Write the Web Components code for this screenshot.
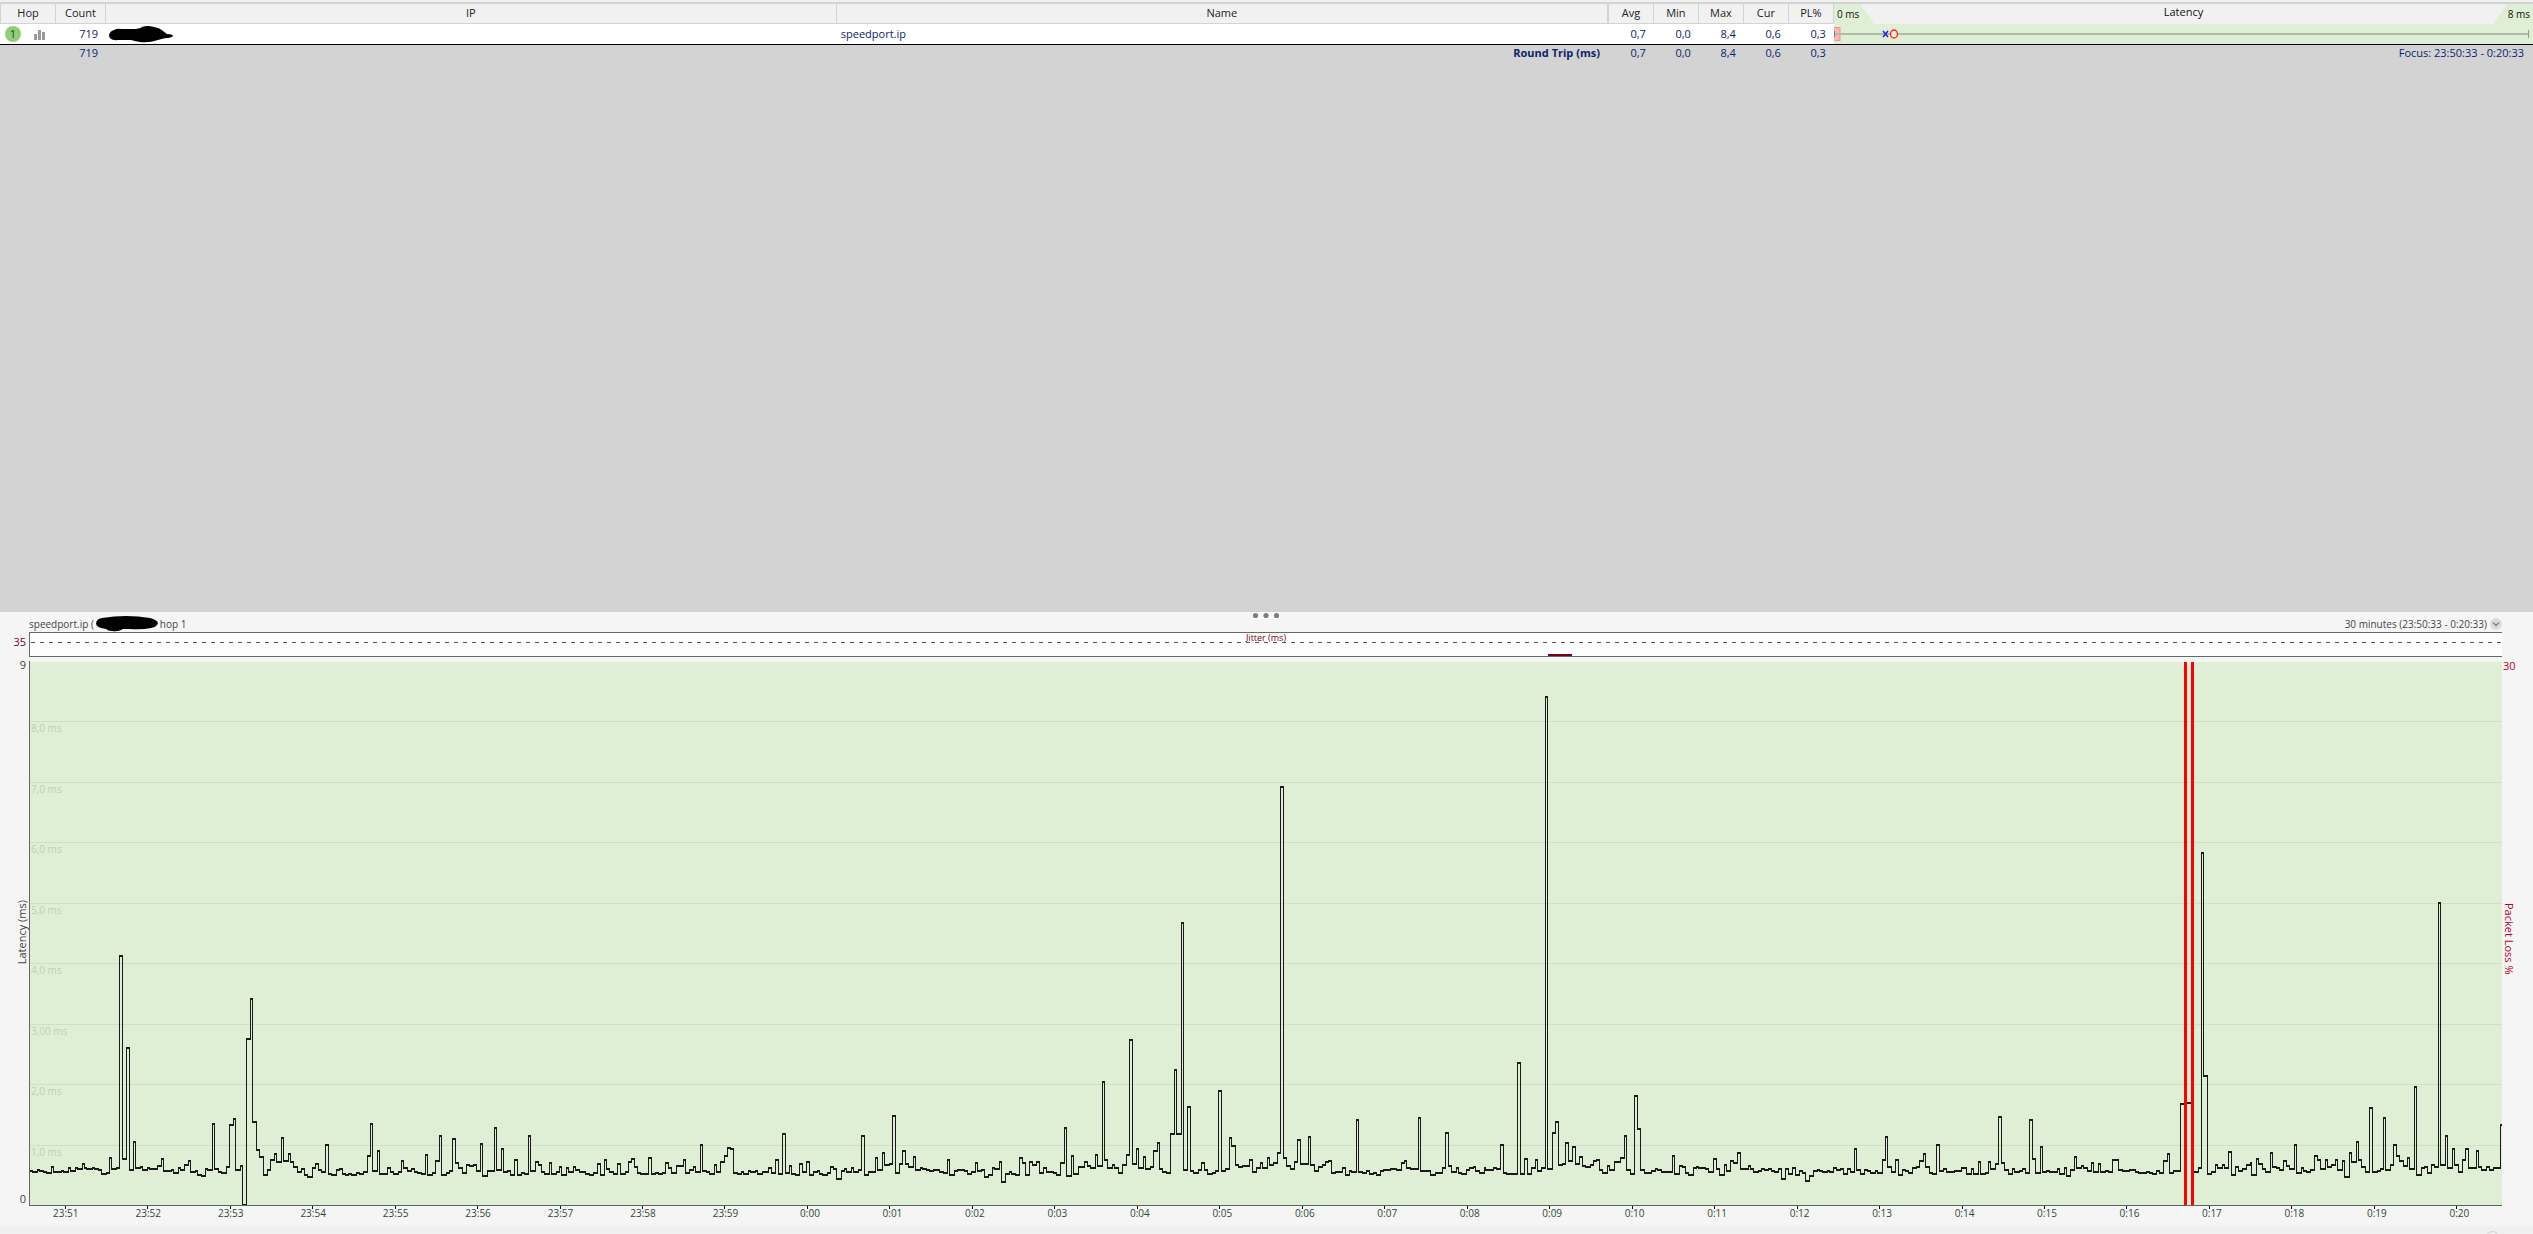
<!DOCTYPE html>
<html lang="en">
<head>
<meta charset="utf-8">
<title>speedport.ip - latency</title>
<style>
  html, body { height: 100%; margin: 0; }
  body { font: 12px/14px "Open Sans", "Noto Sans", sans-serif; background: #f0f0f0; color: #333; }
</style>
</head>
<body>
<ping-monitor></ping-monitor>

<script>
const component = (name, html, setup) => customElements.define(name, class extends HTMLElement {
  constructor() {
    super();
    const t = document.createElement('template');
    t.innerHTML = html;
    this.attachShadow({ mode: 'open' }).append(t.content.cloneNode(true));
  }
  connectedCallback() { if (setup) setup(this, this.shadowRoot); }
});

/* Marker-pen stroke that hides an address */
component('marker-stroke', `
<style>
  :host { display: inline-block; vertical-align: middle; height: 17px; width: 64px; }
  svg { display: block; width: 100%; height: 100%; overflow: visible; }
</style>
<svg viewBox="0 0 64 17" preserveAspectRatio="none" aria-hidden="true">
  <path d="M0 9 Q1 5 5 4 Q8 2 13 3 L24 3 Q30 3 33 1 Q38 -1 45 1 Q51 2 54 5 L58 8 Q64 8 64 10 Q62 12 57 12 Q52 13 49 14 Q40 17 31 16 Q25 15 22 14 L9 14 Q0 15 0 9Z" fill="#000"/>
</svg>`);

/* Same pen, blunter stroke with a drip at its lower left */
component('marker-blot', `
<style>
  :host { display: block; height: 16px; width: 62px; }
  svg { display: block; width: 100%; height: 100%; }
</style>
<svg viewBox="0 0 62 16" preserveAspectRatio="none" aria-hidden="true">
  <path d="M0 8 Q0 3 6 2 Q18 0 30 0 Q42 0 54 2 Q61 4 62 7 Q61 11 55 12 Q46 14 34 13 L27 13 Q22 16 16 15 Q12 15 10 13 Q1 12 0 8Z" fill="#000"/>
</svg>`);

component('bars-icon', `
<style>:host { display: inline-block; width: 12px; height: 11px; } svg { display: block; }</style>
<svg width="12" height="11" viewBox="0 0 12 11" fill="#999" aria-hidden="true">
  <rect x="0" y="5" width="3" height="6"/><rect x="4" y="1" width="3" height="10"/><rect x="8" y="3" width="3" height="8"/>
</svg>`);

component('hop-badge', `
<style>
  :host { display: inline-flex; align-items: center; justify-content: center; width: 16px; height: 16px; border-radius: 50%; background: #92cd74; color: #26433f; }
</style><slot></slot>`);

/* Scale drawn in the header of the latency column */
component('latency-scale', `
<style>
  :host { display: grid; height: 20px; background: #dfefd6; font-weight: 400; color: #111; }
  .plate, .row { grid-area: 1 / 1; }
  .plate { background: #f1f1f1; clip-path: polygon(27px 0, calc(100% - 26px) 0, calc(100% - 40px) 100%, 40px 100%); }
  .row { display: flex; justify-content: space-between; padding: 0 3px; line-height: 15px; isolation: isolate; }
  small { font-size: 10px; line-height: 20px; }
</style>
<div class="plate"></div>
<div class="row"><small>0 ms</small><span>Latency</span><small>8 ms</small></div>`);

/* Min-max whisker with the current (x) and average (o) marks */
component('latency-range', `
<style>
  :host { display: flex; align-items: center; height: 20px; background: #dfefd6; }
  .line { flex: 1; height: 2px; background: #aebba8; }
  .cap { width: 1px; height: 8px; background: #8f9b8b; margin-right: 4px; }
  svg { display: block; }
</style>
<svg width="68" height="20" viewBox="0 0 68 20" aria-hidden="true">
  <rect x="-1" y="3.5" width="7" height="13" fill="#ffb3b8" stroke="#f09a86"/>
  <rect x="0" y="9" width="68" height="2" fill="#aebba8"/>
  <rect x="0" y="7" width="1" height="6" fill="#777"/>
  <path d="M49 7l5 6M54 7l-5 6" stroke="#2222e0" stroke-width="1.500"/>
  <ellipse cx="60" cy="10" rx="3.500" ry="4" fill="#dfefd6" stroke="#f22" stroke-width="1.300"/>
</svg><div class="line"></div><div class="cap"></div>`);

component('hop-table', `
<style>
  :host { display: block; background: #d3d3d3; padding-top: 2px; overflow: hidden; box-shadow: inset 0 2px #f0f0f0; }
  table { width: 100%; table-layout: fixed; border-collapse: separate; border-spacing: 0; margin-top: 2px; color: #0a246a; }
  th, td { padding: 0; box-sizing: border-box; white-space: nowrap; }
  .hop { width: 56px; } .count { width: 50px; } .ip { width: 28.85%; } .n { width: 45px; } .lat { width: 27.6%; }
  thead th { height: 20px; background: #f1f1f1; color: #222; font-weight: 400; border-right: 1px solid #d3d3d3; border-bottom: 1px solid #d3d3d3; line-height: 16px; padding-bottom: 2px; }
  thead th:first-child { border-left: 1px solid #d3d3d3; }
  thead th.name { border-right-width: 2px; }
  thead th.lat { border: 0; padding: 0; }
  tbody td { height: 21px; background: #fff; border-bottom: 1px solid #000; }
  tfoot td { height: 17px; line-height: 16px; vertical-align: top; }
  td.num { text-align: right; padding-right: 8px; }
  td.host { padding-left: 4px; }
  .status { display: flex; align-items: center; gap: 13px; padding-left: 5px; }
  .addr { display: block; padding-left: 3px; line-height: 0; }
  td.trip { font-weight: 700; text-align: right; padding-right: 9px; }
  td.focus { text-align: right; padding-right: 9px; }
</style>
<table>
  <thead><tr>
    <th class="hop">Hop</th><th class="count">Count</th><th class="ip">IP</th><th class="name">Name</th>
    <th class="n">Avg</th><th class="n">Min</th><th class="n">Max</th><th class="n">Cur</th><th class="n">PL%</th>
    <th class="lat"><latency-scale></latency-scale></th>
  </tr></thead>
  <tbody><tr>
    <td><div class="status"><hop-badge>1</hop-badge><bars-icon></bars-icon></div></td>
    <td class="num">719</td><td><span class="addr"><marker-stroke></marker-stroke></span></td><td class="host">speedport.ip</td>
    <td class="num">0,7</td><td class="num">0,0</td><td class="num">8,4</td><td class="num">0,6</td><td class="num">0,3</td>
    <td><latency-range></latency-range></td>
  </tr></tbody>
  <tfoot><tr>
    <td></td><td class="num">719</td><td></td><td class="trip">Round Trip (ms)</td>
    <td class="num">0,7</td><td class="num">0,0</td><td class="num">8,4</td><td class="num">0,6</td><td class="num">0,3</td>
    <td class="focus">Focus: 23:50:33 - 0:20:33</td>
  </tr></tfoot>
</table>`);

component('menu-button', `
<style>
  :host { display: block; }
  button { display: block; width: 12px; height: 12px; padding: 0; border: 0; border-radius: 50%; background: #dcdcdc; }
  svg { display: block; }
</style>
<button type="button" aria-label="Time range"><svg width="12" height="12" viewBox="0 0 12 12"><path d="M3 4.500l3 3 3-3" fill="none" stroke="#888" stroke-width="1.600"/></svg></button>`);

component('split-grip', `
<style>
  :host { display: block; width: 28px; height: 7px; background: #fbfbfb; }
  svg { display: block; }
</style>
<svg width="28" height="7" fill="#7d7d7d" aria-hidden="true"><circle cx="3.500" cy="3.500" r="2.600"/><circle cx="14" cy="3.500" r="2.600"/><circle cx="24.500" cy="3.500" r="2.600"/></svg>`);

/* Line above the graph: target on the left, time range on the right */
component('trace-heading', `
<style>
  :host { display: flex; height: 20px; font-size: 10px; }
  .side { flex: 1 1 0; display: flex; align-items: center; height: 16px; padding-top: 4px; }
  .target { gap: 2px; }
  .range { justify-content: flex-end; gap: 3px; }
</style>
<div class="side target"><span>speedport.ip (</span><marker-blot></marker-blot><span>hop 1</span></div>
<split-grip></split-grip>
<div class="side range"><span>30 minutes (23:50:33 - 0:20:33)</span><menu-button></menu-button></div>`);

component('jitter-strip', `
<style>
  :host { display: grid; box-sizing: border-box; height: 25px; background: #fdfdfd; border: 1px solid #666; border-right: 0; }
  svg, span { grid-area: 1 / 1; }
  svg { width: 100%; height: 23px; }
  span { justify-self: center; color: #7b0010; font-size: 9px; line-height: 10px; }
</style>
<svg viewBox="0 0 2472 23" preserveAspectRatio="none" shape-rendering="crispEdges" aria-hidden="true">
  <path d="M1 9.500H2472" stroke="#555" stroke-dasharray="4 5"/>
  <rect x="1518" y="21" width="24" height="2" fill="#7b0010"/>
</svg>
<span>Jitter (ms)</span>`);

/* Runs of the trace: left edge, units per pixel, then "x level" pairs; a level holds until the next x. */
const RUNS = [
[-29, 2.45, `72 812 79 815 92 809 97 812 107 815 114 819 126 800 131 816 151 812 155 816 168 803 172 813 185 803 189 807 202 792 207 804 213 807 226 803 231 807 241 810 248 822 261 819 268 773 273 807 285 804 293 168 300 777 310 443 317 810 327 725 332 804 344 800 349 810 361 803 366 807 386 797 396 776 400 813 420 810 425 819 437 803 441 810 453 795 462 783 467 816 480 812 485 825 494 828 504 807 509 810 520 671 526 807 536 816 543 819 555 801 562 675 572 657 578 810 589 797 594 914 604 416 613 296 619 666 629 749 635 771 645 825 655 810 662 780 672 762 677 786 689 713 694 783 707 762 712 786 719 800 729 816 738 807 746 825 753 831 766 804 773 792 780 810 787 816 798 734 805 822 812 825 824 810 832 806 839 822 847 825 855 821 861 825 873 819 880 822 890 816 901 768 907 671 913 813 925 752 930 822 950 803 956 816 965 822 977 816 984 783 989 804 998 813 1008 806 1015 816 1022 819 1033 822 1042 765 1048 825 1060 819 1068 783 1077 708 1082 825 1094 819 1101 813 1109 716 1116 789 1124 804 1133 819 1143 795 1150 798 1160 795 1167 813 1177 731 1182 828 1195 813 1212 683 1217 810 1229 746 1234 816 1244 812 1251 825 1261 780 1268 825 1278 819 1285 822 1295 708 1300 813 1313 786 1319 795 1327 816 1334 822 1346 789 1351 822 1364 816 1371 800 1376 825 1388 803 1393 816 1405 800 1410 810 1420 816 1434 822 1444 825 1454 819 1465 792 1470 825 1482 780 1486 807 1493 816 1502 822 1514 792 1520 822 1532 816 1541 786 1548 777 1555 801 1562 819`],
[611, 2.45, `0 822 22 774 28 822 39 819 45 822 55 819 63 789 70 804 77 819 89 798 106 780 112 819 121 810 131 801 137 816 148 735 153 813 162 816 170 822 182 795 187 816 197 786 207 768 214 744 222 747 229 819 239 822 248 816 254 822 266 813 271 816 283 813 288 822 300 816 315 804 321 819 333 780 340 822 349 702 357 819 366 798 371 822 381 825 391 792 398 816 408 786 415 825 425 816 435 813 440 822 447 825 460 819 467 801 473 807 481 837 494 813 501 807 506 816 518 804 523 816 535 810 542 708 550 825 560 816 577 774 582 810 594 759 600 795 611 792 618 648 626 819 636 792 643 753 651 792 658 801 670 771 675 810 688 804 692 807 702 810 709 813 719 810 734 816 743 819 753 780 758 825 770 813 778 810 795 813 802 822 812 816 822 789 827 813 837 810 844 831 855 825 864 804 868 807 881 786 886 846 896 822 906 816 911 822 920 825 930 774 937 789 944 825 954 786 961 795 971 786 978 819 988 804 995 816 1014 819 1020 825 1030 789 1040 684 1045 828 1057 768 1063 822 1074 801 1089 786 1097 798 1103 804 1116 765 1121 798 1133 546 1138 780 1146 804 1158 795 1163 804 1172 819 1182 795 1192 765 1199 420 1207 792 1216 747 1221 804 1233 771 1238 807 1251 801 1258 753 1268 729 1273 807 1280 816 1289 819 1300 702 1309 510 1315 702 1326 68 1332 810 1341 621 1348 813 1355 819 1368 810 1376 789 1383 810 1390 822 1402 819 1409 813 1417 573 1425 813 1434 807 1444 714 1449 738 1459 795 1466 801 1476 798 1493 780 1500 816 1510 804 1520 789 1526 804 1537 774 1543 795 1552 789 1562 759`],
[1251, 2.45, `1 -340 8 774 16 798 25 807 36 786 43 720 50 792 70 711 75 795 84 813 94 801 104 795 111 786 119 783 126 819 136 816 153 804 160 825 170 813 175 816 187 660 192 816 202 819 212 813 219 822 229 819 236 825 246 813 253 810 270 807 285 810 297 789 305 783 310 804 320 807 339 654 344 813 368 825 381 819 398 804 405 699 412 798 420 816 432 804 438 819 445 822 457 810 464 804 474 801 480 813 489 819 500 804 504 810 523 804 530 807 541 735 547 819 555 822 582 489 589 822 600 777 606 822 616 804 626 780 631 813 641 804 650 -609 656 807 668 699 675 666 682 795 692 792 699 729 707 783 717 741 724 792 734 771 741 798 748 801 760 795 768 783 775 780 783 810 790 819 802 798 807 810 820 786 834 774 844 708 849 810 858 822 868 588 876 687 883 810 893 819 910 813 920 807 926 810 934 816 961 768 967 822 979 798 985 801 993 819 1001 825 1013 804 1020 801 1025 804 1043 807 1051 816 1062 777 1069 807 1077 825 1089 795 1095 813 1104 783 1111 789 1121 759 1128 807 1148 798 1153 807 1160 816 1172 813 1180 807 1187 810 1197 807 1203 813 1211 816 1222 807 1228 837 1239 807 1246 822 1256 804 1262 825 1273 813 1280 819 1287 843 1298 828 1307 813 1316 810 1322 813 1329 816 1341 813 1346 816 1356 804 1363 810 1373 807 1380 822 1390 807 1397 816 1407 747 1412 810 1422 822 1433 810 1439 813 1446 819 1459 813 1464 819 1476 780 1483 711 1489 801 1498 816 1508 780 1515 825 1525 810 1532 813 1539 819 1549 804 1559 801 1566 782`],
[1871, 2.477, `51 783 57 762 63 801 73 819 80 822 90 735 98 813 108 807 115 816 135 813 152 804 165 822 177 807 182 822 194 786 199 822 211 819 219 786 224 807 236 792 243 651 252 789 259 810 269 822 278 807 284 816 296 813 303 807 310 819 321 660 328 777 335 819 348 741 353 816 363 813 370 816 390 807 396 822 407 804 412 828 422 810 432 771 437 804 449 798 454 804 465 813 474 789 479 816 491 792 497 816 510 813 516 816 526 780 541 810 550 813 568 810 584 816 591 819 610 816 617 819 626 822 636 813 643 819 652 783 662 762 668 819 677 813 695 612 707 609 724 816 739 804 747 -141 752 528 762 822 772 816 782 795 787 804 799 795 804 804 814 756 821 825 831 801 838 813 848 807 858 795 867 789 871 825 883 777 889 792 898 807 906 816 918 759 923 801 933 804 941 810 950 783 957 798 966 807 977 735 982 819 994 804 999 813 1006 816 1018 810 1027 768 1035 780 1042 807 1055 780 1060 801 1069 795 1079 780 1084 810 1097 783 1101 831 1113 759 1119 786 1131 725 1136 780 1143 801 1152 816 1163 624 1171 816 1183 813 1189 807 1197 654 1202 810 1215 795 1222 735 1230 768 1237 783 1247 798 1257 774 1262 807 1274 561 1280 825 1292 804 1298 801 1307 819 1316 795 1324 801 1334 9 1339 795 1351 708 1356 804 1368 747 1374 795 1383 816 1393 780 1401 747 1407 804 1427 753 1432 801 1441 810 1453 801 1459 810 1470 804 1487 675`]];

component('latency-plot', `
<style>
  :host { display: grid; box-sizing: border-box; min-height: 0; background: #dfefd6; border-left: 1px solid #666; border-bottom: 1px solid #5c665a; box-shadow: inset 0 1px #f5f5f5; overflow: hidden; }
  .grid, svg { grid-area: 1 / 1; min-height: 0; min-width: 0; }
  .grid { display: flex; flex-direction: column; color: #bccfb4; font-size: 10px; line-height: 12px; }
  .grid div { flex: 1; box-sizing: border-box; border-top: 1px solid #cfdfc8; padding-left: 1px; }
  .grid div:first-child { border-color: transparent; }
  svg { width: 100%; height: 100%; }
</style>
<div class="grid"><div></div><div>8,0 ms</div><div>7,0 ms</div><div>6,0 ms</div><div>5,0 ms</div><div>4,0 ms</div><div>3,00 ms</div><div>2,0 ms</div><div>1,0 ms</div></div>
<svg viewBox="1 0 2472 544" preserveAspectRatio="none" shape-rendering="crispEdges" role="img" aria-label="Latency over time">
  <path id="rise" fill="none" stroke="#1a1a1a" stroke-width="1"/>
  <path id="hold" fill="none" stroke="#1a1a1a" stroke-width="2"/>
  <g fill="#f00"><rect x="2155" y="1" width="3" height="543"/><rect x="2162" y="1" width="3" height="543"/></g>
</svg>`, (el, root) => {
  const pts = [];
  for (const [left, scale, text] of RUNS) {
    const v = text.split(' ').map(Number);
    for (let i = 0; i < v.length; i += 2) pts.push([Math.floor(left + v[i] / scale), Math.round(239 + v[i + 1] / 3)]);
  }
  let rise = '', hold = '';
  pts.forEach(([x, y], i) => {
    const end = i + 1 < pts.length ? pts[i + 1][0] : 2473;
    hold += `M${x} ${y}H${end + 1}`;
    if (i && pts[i - 1][1] !== y) rise += `M${x + 0.5} ${pts[i - 1][1]}V${y}`;
  });
  root.getElementById('rise').setAttribute('d', rise);
  root.getElementById('hold').setAttribute('d', hold);
});

component('time-axis', `
<style>
  :host { display: flex; margin: 0 4px 0 -5px; height: 20px; color: #2c4a33; font-size: 10px; line-height: 14px; }
  span { flex: 1 1 0; text-align: center; text-indent: 1px; background: linear-gradient(#111, #111) 50% 0 / 1px 3px no-repeat; }
  .short { text-indent: 5px; }
</style>`, (el, root) => {
  for (let i = 0; i < 30; i++) {
    const m = (51 + i) % 60, s = document.createElement('span');
    s.textContent = i < 9 ? `23:${m}` : `0:${String(m).padStart(2, '0')}`;
    if (i >= 9) s.className = 'short';
    root.append(s);
  }
});

component('trace-panel', `
<style>
  :host { display: grid; grid-template: 20px 25px 4px minmax(0, 1fr) 20px / 29px minmax(0, 1fr) 31px; min-height: 0; background: #f5f5f5; color: #444; }
  trace-heading { grid-area: 1 / 2; }
  jitter-strip { grid-area: 2 / 2; }
  latency-plot { grid-area: 4 / 2; }
  time-axis { grid-area: 5 / 2; }
  .jmax { grid-area: 2 / 1; text-align: right; padding: 3px 3px 0 0; color: #7b0010; }
  .left { grid-area: 4 / 1; display: flex; flex-direction: column; justify-content: space-between; align-items: flex-end; padding: 0 3px 3px 0; line-height: 8px; }
  .right { grid-area: 4 / 3; display: grid; grid-template-rows: 10px 1fr; color: #c00020; padding-left: 1px; line-height: 10px; }
  .v { writing-mode: vertical-rl; line-height: 12px; }
  .left .v { transform: rotate(180deg); margin-right: -2px; }
  .right .v { justify-self: start; align-self: center; }
</style>
<trace-heading></trace-heading>
<span class="jmax">35</span>
<jitter-strip></jitter-strip>
<div class="left"><span>9</span><span class="v">Latency (ms)</span><span>0</span></div>
<latency-plot></latency-plot>
<div class="right"><span>30</span><span class="v">Packet Loss %</span></div>
<time-axis></time-axis>`);

/* Top edge of the next, collapsed graph */
component('next-panel', `
<style>
  :host { display: flex; justify-content: flex-end; height: 8px; overflow: hidden; background: #f0f0f0; padding-right: 34px; }
  i { box-sizing: border-box; width: 13px; height: 13px; margin-top: 5px; border: 1px solid #ccc; border-radius: 50%; }
</style><i></i>`);

component('ping-monitor', `
<style>
  :host { display: grid; grid-template-rows: minmax(0, 612fr) minmax(0, 614fr) 8px; height: 100vh; overflow: hidden; font-size: 11px; }
</style>
<hop-table></hop-table><trace-panel></trace-panel><next-panel></next-panel>`);
</script>
</body>
</html>
